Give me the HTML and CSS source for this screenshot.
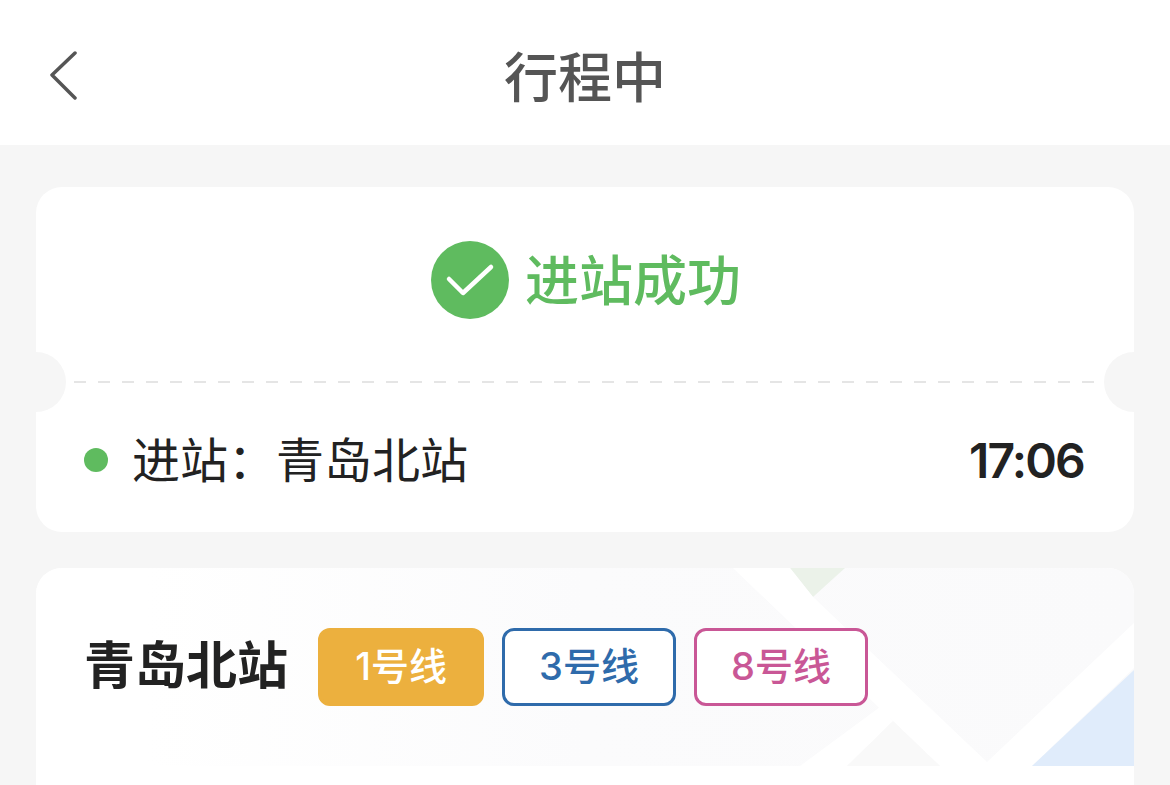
FILE: index.html
```html
<!DOCTYPE html>
<html lang="zh-CN">
<head>
<meta charset="utf-8">
<title>行程中</title>
<link rel="stylesheet" href="styles.css">
</head>
<body>
<div class="page">
  <header class="nav">
    <svg class="back" viewBox="0 0 30 50" aria-hidden="true"><path d="M26 3 L3 25 L26 48" /></svg>
    <h1 class="nav-title">行程中</h1>
  </header>
  <main class="content">
    <section class="card ticket">
      <span class="notch notch-left"></span>
      <span class="notch notch-right"></span>
      <div class="status">
        <svg class="status-icon" viewBox="0 0 78 78" aria-hidden="true">
          <circle class="status-disc" cx="39" cy="39" r="39"/>
          <path class="status-tick" d="M18 38 L32 52 L60 26"/>
        </svg>
        <span class="status-text">进站成功</span>
      </div>
      <div class="dash"></div>
      <div class="entry">
        <span class="dot"></span>
        <span class="entry-text">进站：青岛北站</span>
        <span class="entry-time">17:06</span>
      </div>
    </section>
    <section class="card station">
      <svg class="map" viewBox="0 0 1098 198" preserveAspectRatio="none" aria-hidden="true">
        <defs>
          <linearGradient id="land" x1="0" x2="1" y1="0" y2="0">
            <stop offset="0" stop-color="#ffffff"/>
            <stop offset="0.1" stop-color="#ffffff"/>
            <stop offset="0.5" stop-color="#fbfbfc"/>
            <stop offset="1" stop-color="#fafafb"/>
          </linearGradient>
        </defs>
        <rect width="1098" height="198" fill="url(#land)"/>
        <polygon points="754,0 809,0 777,29" fill="#ebf2e9"/>
        <polygon points="697,0 754,0 777,29 951,194 1098,55 1098,100 996,198 904,198" fill="#ffffff"/>
        <polygon points="764,198 844,139 857,153 811,198" fill="#ffffff"/>
        <polygon points="811,198 857,153 904,198" fill="#f9f9f9"/>
        <polygon points="996,198 1098,102 1098,198" fill="#e0ecfb"/>
      </svg>
      <div class="station-head">
        <h2 class="station-name">青岛北站</h2>
        <span class="tag tag-yellow">1号线</span>
        <span class="tag tag-blue">3号线</span>
        <span class="tag tag-pink">8号线</span>
      </div>
    </section>
  </main>
</div>
</body>
</html>
```
FILE: styles.css
```css
* { box-sizing: border-box; }
html, body { margin: 0; height: 100%; overflow: hidden; }
body {
  background: #f6f6f6;
  font-family: Inter, "Noto Sans CJK SC", sans-serif;
  color: #222;
}
.page { height: 785px; display: flex; flex-direction: column; }

.nav {
  position: relative;
  flex: 0 0 145px;
  background: #fff;
  display: flex;
  align-items: center;
  justify-content: center;
  padding-top: 12px;
}
.back {
  position: absolute;
  left: 49px;
  top: 50px;
  width: 30px;
  height: 50px;
  fill: none;
  stroke: #555;
  stroke-width: 3.5;
  stroke-linecap: round;
  stroke-linejoin: round;
}
.nav-title {
  margin: 0;
  font-size: 54px;
  font-weight: 500;
  line-height: 1;
  color: #555;
}

.content {
  flex: 1;
  min-height: 0;
  padding: 42px 36px 0;
  display: flex;
  flex-direction: column;
  gap: 36px;
}
.card {
  position: relative;
  background: #fff;
  border-radius: 26px;
  overflow: hidden;
}

.ticket { flex: 0 0 345px; display: flex; flex-direction: column; }
.notch {
  position: absolute;
  top: 165px;
  width: 60px;
  height: 60px;
  border-radius: 50%;
  background: #f6f6f6;
}
.notch-left { left: -30px; }
.notch-right { right: -30px; }

.status {
  flex: 0 0 194px;
  display: flex;
  align-items: center;
  justify-content: center;
  gap: 16px;
  padding: 0 0 8px 2px;
}
.status-icon { width: 78px; height: 78px; }
.status-disc { fill: #5fbb5f; }
.status-tick {
  fill: none;
  stroke: #fff;
  stroke-width: 4.5;
  stroke-linecap: round;
  stroke-linejoin: round;
}
.status-text { font-size: 54px; font-weight: 500; line-height: 1; color: #5fbb5f; margin-top: 3px; }

.dash {
  flex: 0 0 2px;
  margin: 0 40px 0 38px;
  background: repeating-linear-gradient(90deg, #e5e5e5 0 12px, transparent 12px 24px);
}
.entry {
  flex: 1;
  display: flex;
  align-items: center;
  padding: 6px 50px 0 48px;
}
.dot { width: 24px; height: 24px; border-radius: 50%; background: #5fbb5f; margin: -2px 24px 0 0; }
.entry-text { font-size: 48px; line-height: 1; flex: 1; }
.entry-time { font-size: 48px; line-height: 1; font-weight: 600; letter-spacing: -1.8px; }

.station { flex: 1; min-height: 0; border-radius: 26px 26px 0 0; }
.map { position: absolute; left: 0; top: 0; width: 100%; height: 198px; }
.station-head {
  position: relative;
  display: flex;
  align-items: center;
  padding: 60px 50px 0 48px;
  gap: 18px;
}
.station-name {
  margin: -4px 12px 0 0;
  font-size: 51px;
  font-weight: 700;
  line-height: 1;
}
.tag {
  height: 78px;
  border-radius: 12px;
  border: 3px solid;
  display: flex;
  align-items: center;
  justify-content: center;
  font-size: 38px;
  font-weight: 500;
  line-height: 1;
  padding-bottom: 2px;
  background: #fff;
}
.tag-yellow { width: 166px; background: #ecb03e; border-color: #ecb03e; color: #fff; }
.tag-blue { width: 174px; border-color: #2f6bab; color: #2f6bab; }
.tag-pink { width: 174px; border-color: #c95796; color: #c95796; }
```
